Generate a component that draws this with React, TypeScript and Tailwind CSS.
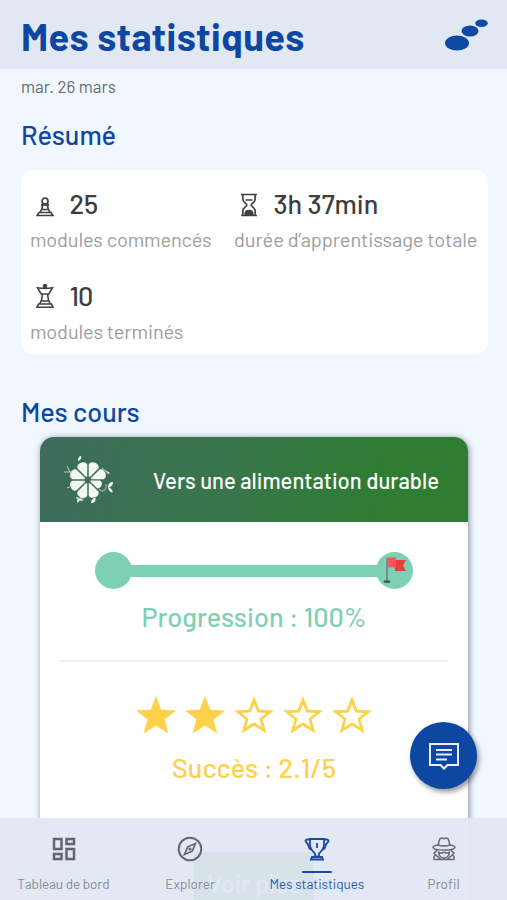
import React from "react";
import { MdOutlineDashboard } from "react-icons/md";

interface StatProps {
  icon: React.ReactNode;
  value: string;
  label: string;
  valueClass: string;
  labelClass: string;
}

const PawnIcon = () => (
  <svg width="18" height="20" viewBox="0 0 18 20" fill="none" stroke="#3f4244" strokeWidth="1.7">
    <circle cx="9" cy="4.200" r="3" />
    <path d="M5 7.800h8M6.500 8c0 3-.8 5-2.600 7.500M11.500 8c0 3 .8 5 2.600 7.500M5 12.500h8M3 15.500h12l1.800 3H1.200z" />
  </svg>
);

const QueenIcon = () => (
  <svg width="18" height="25" viewBox="0 0 18 25" fill="none" stroke="#3f4244" strokeWidth="1.6">
    <circle cx="9" cy="2.200" r="1.500" fill="#3f4244" />
    <path d="M1.500 3.800c5 .8 10 .8 15 0L12.800 10H5.200zM6.200 10.500c0 4-.8 7-2.800 9.500M11.800 10.500c0 4 .8 7 2.800 9.500M5.300 17h7.400M2.600 20h12.800l1.600 3.300H1z" />
  </svg>
);

const HourglassIcon = () => (
  <svg width="18" height="24" viewBox="0 0 18 24" fill="none" stroke="#3f4244" strokeWidth="1.700">
    <path d="M1 1.500h16M1 22.500h16M2.800 2v4c0 3.500 4 4.300 4 6s-4 2.500-4 6v4M15.200 2v4c0 3.500-4 4.300-4 6s4 2.500 4 6v4M5.500 7h7" />
    <path d="M5 22c0-3.500 2-4.500 4-4.500s4 1 4 4.500z" fill="#3f4244" />
  </svg>
);

const LeafIcon = () => (
  <svg width="52" height="50" viewBox="0 0 52 50" fill="#f3f8f3">
    {[0, 45, 90, 135, 180, 225, 270, 315].map((angle) => (
      <path
        key={angle}
        transform={`rotate(${angle + 22.5} 26 25)${angle === 90 ? " translate(5.7 5.5) scale(.78)" : ""}`}
        d="M25.400 21.500l-4.600-11c-.3-2.300 2-4.200 5.200-4.200s5.500 1.900 5.200 4.200l-4.600 11z"
      />
    ))}
    <path d="M16 5.500c0-3 1.500-4.500 3-4.500 1 2-.5 4-2.500 5zM43 15l5 3-2 1zM46 32c0-3 2-5 5-5 0 3-1.500 4.500-4 5.500 2 .8 3.500 2.500 3.800 5-3-.2-4.500-2-4.800-5.500zM29 48c0-3 2-5 4.500-5 .5 3-1 5-4.500 5zM14 42l3.500 1 2.500-1.500-1 2.500 3 2-4-.5-3 2.500.5-3.500z" />
    <path
      d="M2 17h8M5 11l4 8M5 33l5-2M14 43l8 1M37 34c3 4 8 2 7-5M40 13l6 5"
      fill="none"
      stroke="#b9d0c0"
      strokeWidth="1"
    />
  </svg>
);

const FlagIcon = () => (
  <svg width="24" height="28" viewBox="0 0 24 28">
    <ellipse cx="4" cy="25.500" rx="3.300" ry="1.500" fill="#435a68" />
    <path d="M4 2v23" stroke="#5c7783" strokeWidth="1.300" />
    <path d="M12 4h11l-3 5.500 3 5.500H12z" fill="#ec3d3c" />
    <path d="M4 1.500h9v10H4z" fill="#fb5660" />
  </svg>
);

const CompassIcon = () => (
  <svg width="26" height="26" viewBox="0 0 26 26" fill="none" stroke="#62676f">
    <circle cx="13" cy="13" r="11.300" strokeWidth="2" />
    <path d="M18.500 7.500l-3.300 7.700-7.700 3.300 3.300-7.700z" strokeWidth="1.700" />
    <circle cx="13" cy="13" r="1.500" fill="#62676f" stroke="none" />
  </svg>
);

const TrophyIcon = () => (
  <svg width="26" height="24" viewBox="0 0 26 24" fill="none" stroke="#184aa5" strokeWidth="1.800">
    <path d="M6 2h14v5.500c0 5-3 7-5 9v3h-4v-3c-2-2-5-4-5-9zM8 20h10l1 2.500H7z" />
    <path d="M6 2.500H3.500C1 2.500 1 4 2.500 5.500 4 7 4.500 7.500 4.700 9.500c.2 2 1.300 2.800 3 3M20 2.500h2.500C25 2.500 25 4 23.500 5.500 22 7 21.500 7.500 21.300 9.500c-.2 2-1.300 2.800-3 3M13 6v5" />
  </svg>
);

const DetectiveIcon = () => (
  <svg
    width="24"
    height="24"
    viewBox="0 0 24 24"
    fill="none"
    stroke="#686d74"
    strokeWidth="1.600"
    strokeLinejoin="round"
  >
    <path d="M6 8l1.600-5.500C8 .8 10 1 11 1.500h2c1-.5 3-.7 3.400 1L18 8c3 .3 4.800 1.200 4.800 2.400C22.800 12 18.500 13 12 13S1.200 12 1.200 10.400C1.200 9.200 3 8.300 6 8c3 1.200 9 1.200 12 0" />
    <path d="M5.500 12.800L2 16l1.800 2L2 19.500V22.500h20v-3L20.200 18l1.800-2-3.500-3.200M6 15c1 0 3 2 5 .5h2c2 1.500 4-.5 5-.5M6.500 15c.4 3.500 2.500 6 5.500 6s5.100-2.500 5.500-6M3.800 18l5 4.500M20.200 18l-5 4.500" />
  </svg>
);

const Stat: React.FC<StatProps> = ({ icon, value, label, valueClass, labelClass }) => (
  <div className="h-[92px] whitespace-nowrap">
    <div className="flex h-[30px] items-center pl-[6px]">
      <span className="mt-[3px] flex h-[24px] w-[33.5px] shrink-0 items-end">{icon}</span>
      <span className={`text-[27px] leading-[30px] font-medium text-[#3c3e40] ${valueClass}`}>{value}</span>
    </div>
    <p className={`mt-[9px] text-[20px] leading-[24px] text-[#9d9d9d] ${labelClass}`}>{label}</p>
  </div>
);

const Star: React.FC<{ filled: boolean }> = ({ filled }) => (
  <svg width="40" height="38" viewBox="0 0 40 38">
    <path
      d="M20 0l5.300 13.700L40 14.500 28.500 23.600 32.500 37.500 20 29.800 7.500 37.500 11.500 23.600 0 14.500l14.700-.8z"
      fill="#ffd04a"
    />
    {!filled && <path d="M20 8l3.400 8.500 9.100.6-7 5.600 2.400 8.500-7.900-4.900-7.900 4.900 2.400-8.500-7-5.600 9.100-.6z" fill="#fff" />}
  </svg>
);

const tabs = [
  {
    label: "Tableau de bord",
    icon: <MdOutlineDashboard className="ml-px" size={30} color="#62676f" />,
    text: "text-[#858b95] tracking-[-0.05px]",
  },
  { label: "Explorer", icon: <CompassIcon />, text: "text-[#858b95] tracking-[0.05px]" },
  { label: "Mes statistiques", icon: <TrophyIcon />, text: "text-[#285bb5] tracking-[-0.05px]", active: true },
  { label: "Profil", icon: <DetectiveIcon />, text: "text-[#858b95] tracking-[0.1px]" },
];

export default function App() {
  return (
    <div className="relative h-[900px] w-[507px] overflow-hidden bg-[#f0f7ff] font-['Barlow',Roboto,sans-serif]">
      <header className="flex h-[69px] items-center justify-between bg-[#e1e8f3] pr-[18.5px] pl-[21px]">
        <h1 className="mt-[3px] text-[38px] leading-[46px] font-bold tracking-[0.45px] whitespace-nowrap text-[#0d47a1]">
          Mes statistiques
        </h1>
        <svg className="mt-px" width="44" height="32" viewBox="0 0 44 32" fill="#1049a4">
          <ellipse cx="12" cy="24" rx="12" ry="7.500" />
          <ellipse cx="25" cy="12" rx="8.500" ry="5.500" />
          <ellipse cx="36.500" cy="4.300" rx="6.200" ry="3.800" />
        </svg>
      </header>

      <main>
        <div className="px-[21px] pt-[6px]">
          <p className="text-[17px] leading-[22px] text-[#666b70]">mar. 26 mars</p>
          <h2 className="mt-[21px] text-[27px] leading-[32px] font-medium text-[#0d47a1]">Résumé</h2>
        </div>

        <section className="mt-[20px] ml-[21px] grid h-[184px] w-[467px] grid-cols-[204px_1fr] content-start rounded-[12px] bg-white pt-[18px] pl-[9px]">
          <Stat
            icon={<PawnIcon />}
            value="25"
            label="modules commencés"
            valueClass="tracking-[-0.3px]"
            labelClass="tracking-[-0.12px]"
          />
          <Stat
            icon={<HourglassIcon />}
            value="3h 37min"
            label="durée d’apprentissage totale"
            valueClass="tracking-[-0.05px]"
            labelClass="tracking-[-0.08px]"
          />
          <Stat
            icon={<QueenIcon />}
            value="10"
            label="modules terminés"
            valueClass="tracking-[-1px]"
            labelClass="tracking-[-0.1px]"
          />
        </section>

        <h2 className="mt-[41px] pl-[21px] text-[27px] leading-[32px] font-medium text-[#0d47a1]">Mes cours</h2>

        <article className="mt-[10px] ml-[40px] h-[520px] w-[428px] overflow-hidden rounded-[14px] bg-white shadow-[1px_1px_6px_rgba(40,45,60,0.55)]">
          <div className="flex h-[85px] items-center bg-linear-[100deg,#3e6b5d_0%,#38764a_45%,#2e7d32_80%] pl-[22px] text-white">
            <LeafIcon />
            <h3 className="ml-[39px] text-[22px] leading-[28px] font-medium tracking-[0.04px] whitespace-nowrap">
              Vers une alimentation durable
            </h3>
          </div>
          <div className="mx-[55px] mt-[30px] flex h-[37px] items-center">
            <div className="size-[37px] rounded-full bg-[#7ed0b4]" />
            <div className="-mx-px h-[12px] flex-1 bg-[#7ed0b4]" />
            <div className="flex size-[37px] items-center justify-center rounded-full bg-[#7ed0b4] pb-[2px]">
              <FlagIcon />
            </div>
          </div>
          <p className="mt-[11px] text-center text-[27px] leading-[32px] font-medium whitespace-nowrap text-[#7ed0b4]">
            Progression : 100%
          </p>
          <hr className="mx-[20px] mt-[28px] border-t-2 border-[#efefef]" />
          <div className="mt-[34px] flex justify-center gap-[9px]">
            {[1, 2, 3, 4, 5].map((n) => (
              <Star key={n} filled={n <= 2} />
            ))}
          </div>
          <p className="mt-[17px] text-center text-[27px] leading-[32px] font-medium tracking-[0.05px] whitespace-nowrap text-[#ffd04a]">
            Succès : 2.1/5
          </p>
          <button className="mx-auto mt-[69px] block h-[56px] w-[120px] bg-[#2e7d32] pt-[7px] text-[25px] font-medium whitespace-nowrap text-white">
            Voir plus
          </button>
        </article>
      </main>

      <button
        className="absolute top-[722px] left-[410px] flex size-[67px] items-center justify-center rounded-full bg-[#0d47a1] pt-px shadow-[2px_3px_5px_rgba(40,45,60,0.5)]"
        aria-label="Messages"
      >
        <svg width="32" height="28" viewBox="0 0 32 28" fill="none" stroke="#e8f0ff" strokeWidth="2">
          <path d="M2 2h28v21H19.500L16 26.500 12.500 23H2z" />
          <path d="M8 8h16M8 12.500h16M8 17.500h11" />
        </svg>
      </button>

      <nav className="absolute bottom-0 left-0 flex h-[82px] w-full bg-[#e1e8f3]/95">
        {tabs.map(({ label, icon, text, active }) => (
          <div key={label} className="relative flex flex-1 flex-col items-center pt-[16px]">
            <div className="flex h-[30px] items-center">{icon}</div>
            {active && <div className="absolute top-[53px] h-[2px] w-[30px] rounded bg-[#184aa5]" />}
            <span className={`mt-[11px] text-[13.5px] leading-[18px] whitespace-nowrap ${text}`}>{label}</span>
          </div>
        ))}
      </nav>
    </div>
  );
}
